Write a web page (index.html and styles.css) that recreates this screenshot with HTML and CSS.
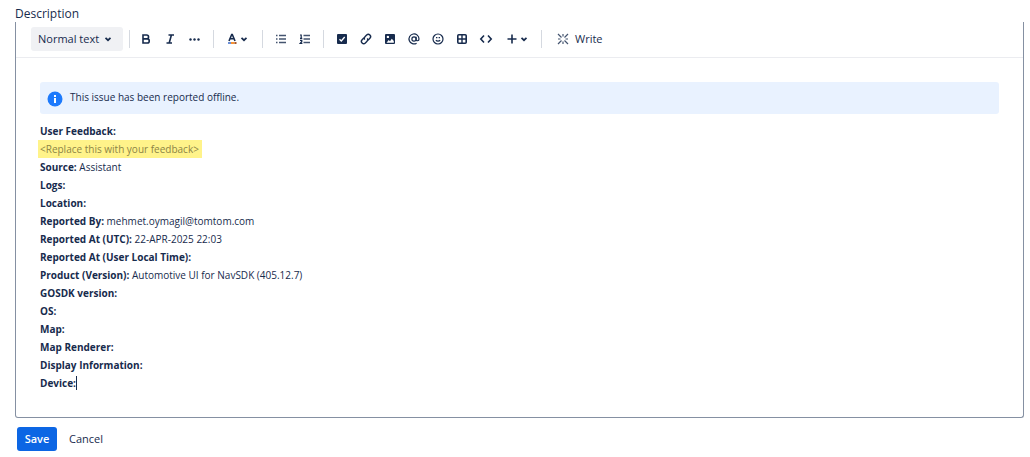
FILE: index.html
```html
<!DOCTYPE html>
<html lang="en">
<head>
<meta charset="utf-8">
<title>Description</title>
<link rel="stylesheet" href="styles.css">
</head>
<body>
<main class="field">
  <h2 class="label" id="desc-label">Description</h2>
  <section class="editor" aria-labelledby="desc-label">
    <div class="toolbar" role="toolbar" aria-label="Formatting">
      <button class="style-picker" type="button">Normal text
        <svg class="chevron" viewBox="0 0 8 8"><path d="M1.5 2.800 4 5.200 6.500 2.800"/></svg>
      </button>
      <span class="separator"></span>
      <div class="group group-text">
        <button class="tool" type="button" aria-label="Bold"><svg viewBox="0 0 16 16"><path class="line" d="M5 4h3.600a1.900 1.900 0 0 1 0 3.900H5zM5 7.900h4.200a2 2 0 0 1 0 4.100H5z"/></svg></button>
        <button class="tool" type="button" aria-label="Italic"><svg viewBox="0 0 16 16"><path class="line" d="M6.500 4h5.500M4.500 12H10M9.400 4 7.200 12"/></svg></button>
        <button class="tool" type="button" aria-label="More formatting"><svg viewBox="0 0 16 16"><circle cx="4.500" cy="8.500" r="1.200"/><circle cx="8.500" cy="8.500" r="1.200"/><circle cx="12.500" cy="8.500" r="1.200"/></svg></button>
      </div>
      <span class="separator"></span>
      <div class="group group-colour">
        <button class="tool tool-wide" type="button" aria-label="Text colour">
          <svg viewBox="0 0 16 16"><path class="line" d="M5 10 7.700 3.500h.6L11 10M6 7.700h4"/><path fill="#6b8fd6" d="M4 11h3v2H4z"/><path fill="#f79233" d="M7 11h3.500v2H7z"/><path fill="#a5572b" d="M10.500 11h2v2h-2z"/></svg>
          <svg class="chevron" viewBox="0 0 8 8"><path d="M1.500 2.800 4 5.200 6.500 2.800"/></svg>
        </button>
      </div>
      <span class="separator"></span>
      <div class="group">
        <button class="tool" type="button" aria-label="Bullet list"><svg viewBox="0 0 16 16"><path class="list" d="M6 4.500h7M6 8h7M6 11.500h7M3 4.500h1.500M3 8h1.500M3 11.500h1.500"/></svg></button>
        <button class="tool" type="button" aria-label="Numbered list"><svg viewBox="0 0 16 16"><path class="list" d="M6.500 4.500H13M6.500 8H13M6.500 11.500H13"/><path class="thin" d="M3 4h1.200v3.200M3 7.300h2.300M3 9.300h1.800v1.200L3.200 12.300h2.200"/></svg></button>
      </div>
      <span class="separator"></span>
      <div class="group group-insert">
        <button class="tool" type="button" aria-label="Action item"><svg viewBox="0 0 16 16"><rect x="3" y="3" width="10" height="10" rx="1"/><path class="cut" d="m5.500 8.200 1.800 1.800 3.400-4"/></svg></button>
        <button class="tool" type="button" aria-label="Link"><svg viewBox="0 0 16 16"><g transform="rotate(-45 8 8)"><path class="mid" d="M7.500 5.700H4.800a2.300 2.300 0 0 0 0 4.600h2.400a2.300 2.300 0 0 0 2.200-1.800M8.500 10.300h2.700a2.300 2.300 0 0 0 0-4.600H8.800a2.300 2.300 0 0 0-2.200 1.800"/></g></svg></button>
        <button class="tool" type="button" aria-label="Image"><svg viewBox="0 0 16 16"><rect x="3" y="3" width="10" height="10" rx="1"/><circle cx="5.900" cy="5.900" r="1.200" fill="#fff"/><path fill="#fff" d="m4.500 11.700 2.200-2.700 1.300 1.200 1.800-2.400 2 2.300v1.600z"/></svg></button>
        <button class="tool" type="button" aria-label="Mention"><svg viewBox="0 0 16 16"><circle class="thin" cx="8" cy="8" r="2.100"/><path class="thin" d="M10.100 5.700v2.800c0 1.800 2.900 1.700 2.900-.5a5 5 0 1 0-2.400 4.200"/></svg></button>
        <button class="tool" type="button" aria-label="Emoji"><svg viewBox="0 0 16 16"><circle class="thin" cx="8" cy="8" r="5"/><path class="thin" d="M6 6.600h1.400M8.600 6.600H10M5.900 9.100c.9 1.300 3.300 1.300 4.200 0"/></svg></button>
        <button class="tool" type="button" aria-label="Table"><svg viewBox="0 0 16 16"><rect class="line" x="3.800" y="3.800" width="8.400" height="8.400" rx="1"/><path class="mid" d="M8 4v8M4 8h8"/></svg></button>
        <button class="tool" type="button" aria-label="Code snippet"><svg viewBox="0 0 16 16"><path class="line" d="M6 4.500 2.800 8 6 11.500M10 4.500 13.200 8 10 11.500"/></svg></button>
        <button class="tool tool-wide" type="button" aria-label="Insert">
          <svg viewBox="0 0 16 16"><path class="line" d="M8 3.500v9M3.500 8h9"/></svg>
          <svg class="chevron" viewBox="0 0 8 8"><path d="M1.500 2.800 4 5.200 6.500 2.800"/></svg>
        </button>
      </div>
      <span class="separator"></span>
      <button class="write" type="button">
        <svg viewBox="0 0 16 16"><path class="spark" d="m3 3 3.500 3.500M13 3 9.500 6.500M3 13l3.500-3.500M13 13 9.500 9.500M8 3v2.500M8 10.500V13M3 8h2.500M10.500 8H13"/></svg>Write
      </button>
    </div>
    <div class="content">
      <div class="panel">
        <svg class="info" viewBox="0 0 16 16"><circle cx="8" cy="8" r="7.500"/><path fill="#fff" d="M7 7h2v5H7zM7 4h2v2H7z"/></svg>
        <p>This issue has been reported offline.</p>
      </div>
      <div class="text">
        <p><b>User Feedback:</b></p>
        <p><mark>&lt;Replace this with your feedback&gt;</mark></p>
        <p><b>Source:</b> Assistant</p>
        <p><b>Logs:</b></p>
        <p><b>Location:</b></p>
        <p><b>Reported By:</b> mehmet.oymagil@tomtom.com</p>
        <p><b>Reported At (UTC):</b> 22-APR-2025 22:03</p>
        <p><b>Reported At (User Local Time):</b></p>
        <p><b>Product (Version):</b> Automotive UI for NavSDK (405.12.7)</p>
        <p><b>GOSDK version:</b></p>
        <p><b>OS:</b></p>
        <p><b>Map:</b></p>
        <p><b>Map Renderer:</b></p>
        <p><b>Display Information:</b></p>
        <p class="current"><b>Device:</b><span class="caret"></span></p>
      </div>
    </div>
  </section>
  <div class="actions">
    <button class="save" type="button">Save</button>
    <button class="cancel" type="button">Cancel</button>
  </div>
</main>
</body>
</html>
```
FILE: styles.css
```css
* { box-sizing: border-box; }
body {
  margin: 0;
  background: #fff;
  color: #172b4d;
  font: 11px/18px "Open Sans", "Noto Sans", sans-serif;
}
p { margin: 0; }
button {
  border: 0;
  padding: 0;
  background: none;
  color: inherit;
  font: inherit;
}
svg { width: 16px; height: 16px; flex: none; fill: #172b4d; }
.field { padding: 5px 6px 0 15px; }
.label { margin: 0; font-size: 12px; line-height: 17px; font-weight: 500; }
.editor {
  border: 1px solid #8590a2;
  border-top: 0;
  border-radius: 0 0 3px 3px;
}
.toolbar {
  display: flex;
  align-items: center;
  height: 36px;
  padding: 0 15px 2px;
  border-bottom: 1px solid #ebecf0;
}
.style-picker {
  display: flex;
  align-items: center;
  justify-content: space-between;
  width: 92px;
  height: 24px;
  padding: 0 11px 0 7px;
  border-radius: 3px;
  background: #f0f1f4;
  white-space: nowrap;
}
.chevron { width: 8px; height: 8px; }
.chevron path { fill: none; stroke: #172b4d; stroke-width: 1.700; }
.separator { width: 1px; height: 18px; margin: 0 4px 0 6px; background: #d5d9e0; }
.group { display: flex; padding-left: 2px; }
.group-text { padding: 0 1px 0 0; }
.group-colour { padding: 0 2px 0 0; }
.group-insert { padding-right: 1px; }
.tool {
  display: flex;
  align-items: center;
  justify-content: center;
  width: 24px;
  height: 24px;
}
.tool-wide { width: 36px; }
.line, .mid, .thin, .list, .spark, .cut { fill: none; stroke: #172b4d; stroke-width: 1.600; }
.mid { stroke-width: 1.400; }
.thin { stroke-width: 1.200; }
.list { stroke: #44546f; stroke-width: 1.500; }
.spark { stroke: #44546f; stroke-width: 1.200; }
.cut { stroke: #fff; stroke-width: 1.300; }
.write { display: flex; align-items: center; gap: 4px; padding-left: 9px; }
.content { padding: 24px 24px 25px; font-size: 10px; }
.panel {
  display: flex;
  gap: 7px;
  height: 32px;
  padding: 6px 7px;
  border-radius: 3px;
  background: #e9f2ff;
}
.info { margin-top: 3px; fill: #1d7afc; }
.text { padding-top: 8px; }
b { font-weight: 700; }
mark {
  margin-left: -2px;
  padding: 2px 3px 2px 2px;
  background: #fff38a;
  color: #8c8446;
}
.current { display: flex; align-items: center; }
.caret { width: 1px; height: 14px; background: #172b4d; }
.actions { display: flex; gap: 12px; padding: 9px 2px; }
.save {
  width: 40px;
  height: 24px;
  border-radius: 3px;
  background: #0c66e4;
  color: #fff;
  font-weight: 600;
}
```
